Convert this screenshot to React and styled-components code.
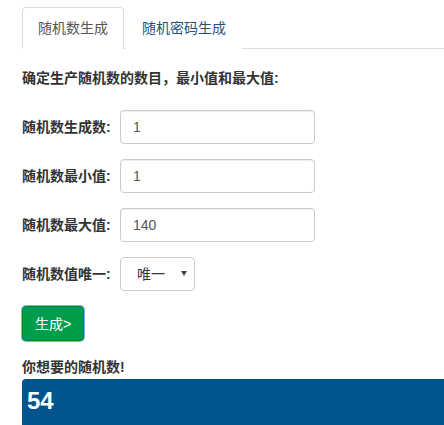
import React from "react";
import styled, { createGlobalStyle } from "styled-components";

const Global = createGlobalStyle`
  html, body { margin: 0; padding: 0; background: #fff; }
  body {
    font-family: "Liberation Sans", Arial, "Noto Sans CJK SC", sans-serif;
    font-size: 14px;
    line-height: 20px;
    color: #333;
  }
  * { box-sizing: border-box; }
`;

const Page = styled.div`
  padding: 7px 0 0 22px;
`;

const Tabs = styled.ul`
  display: flex;
  list-style: none;
  margin: 0;
  padding: 0;
  border-bottom: 1px solid #ddd;
`;

const Tab = styled.li`
  margin-right: 2px;
  margin-bottom: -1px;
  padding: 10px 15px;
  line-height: 20px;
  border: 1px solid ${(p) => (p.$active ? "#ddd" : "transparent")};
  border-bottom-color: ${(p) => (p.$active ? "#fff" : "transparent")};
  border-radius: 4px 4px 0 0;
  background: #fff;
  color: ${(p) => (p.$active ? "#555" : "#23527c")};
`;

const Intro = styled.p`
  margin: 19px 0 22px;
  font-weight: bold;
`;

const Row = styled.div`
  display: flex;
  align-items: center;
  margin-bottom: 15px;
`;

const Label = styled.label`
  width: 98px;
  font-weight: bold;
`;

const Input = styled.input`
  width: 195px;
  height: 34px;
  padding: 6px 12px;
  font: inherit;
  color: #555;
  border: 1px solid #ccc;
  border-radius: 4px;
  box-shadow: inset 0 1px 1px rgba(0, 0, 0, 0.075);
`;

const SelectWrap = styled.div`
  position: relative;
  width: 75px;
  height: 34px;
`;

const Select = styled.select`
  appearance: none;
  -webkit-appearance: none;
  width: 100%;
  height: 100%;
  padding: 6px 12px 6px 16px;
  font: inherit;
  color: #333;
  background: #fff;
  border: 1px solid #ccc;
  border-radius: 4px;
`;

const Arrow = styled.span`
  position: absolute;
  right: 8px;
  top: 14px;
  width: 0;
  height: 0;
  border-left: 3px solid transparent;
  border-right: 3px solid transparent;
  border-top: 5px solid #444;
  pointer-events: none;
`;

const Button = styled.button`
  display: block;
  height: 35px;
  padding: 6px 12px;
  margin: 0 0 16px 0;
  font: inherit;
  color: #fff;
  background: #009e4c;
  border: 1px solid #00833f;
  border-radius: 4px;
  box-shadow: 0 0 0 1px #7fb6ee;
`;

const ResultTitle = styled.p`
  margin: 0 0 2px;
  font-weight: bold;
`;

const ResultBox = styled.div`
  height: 60px;
  padding: 7px 5px;
  background: #02548f;
  color: #fff;
  font-size: 24px;
  line-height: 30px;
  font-weight: bold;
  border-radius: 4px 0 0 0;
`;

export default function App() {
  return (
    <>
      <Global />
      <Page>
        <Tabs>
          <Tab $active>随机数生成</Tab>
          <Tab>随机密码生成</Tab>
        </Tabs>
        <Intro>确定生产随机数的数目，最小值和最大值:</Intro>
        <Row>
          <Label>随机数生成数:</Label>
          <Input defaultValue="1" />
        </Row>
        <Row>
          <Label>随机数最小值:</Label>
          <Input defaultValue="1" />
        </Row>
        <Row>
          <Label>随机数最大值:</Label>
          <Input defaultValue="140" />
        </Row>
        <Row>
          <Label>随机数值唯一:</Label>
          <SelectWrap>
            <Select defaultValue="1">
              <option value="1">唯一</option>
              <option value="0">不唯一</option>
            </Select>
            <Arrow />
          </SelectWrap>
        </Row>
        <Button>生成&gt;</Button>
        <ResultTitle>你想要的随机数!</ResultTitle>
        <ResultBox>54</ResultBox>
      </Page>
    </>
  );
}
